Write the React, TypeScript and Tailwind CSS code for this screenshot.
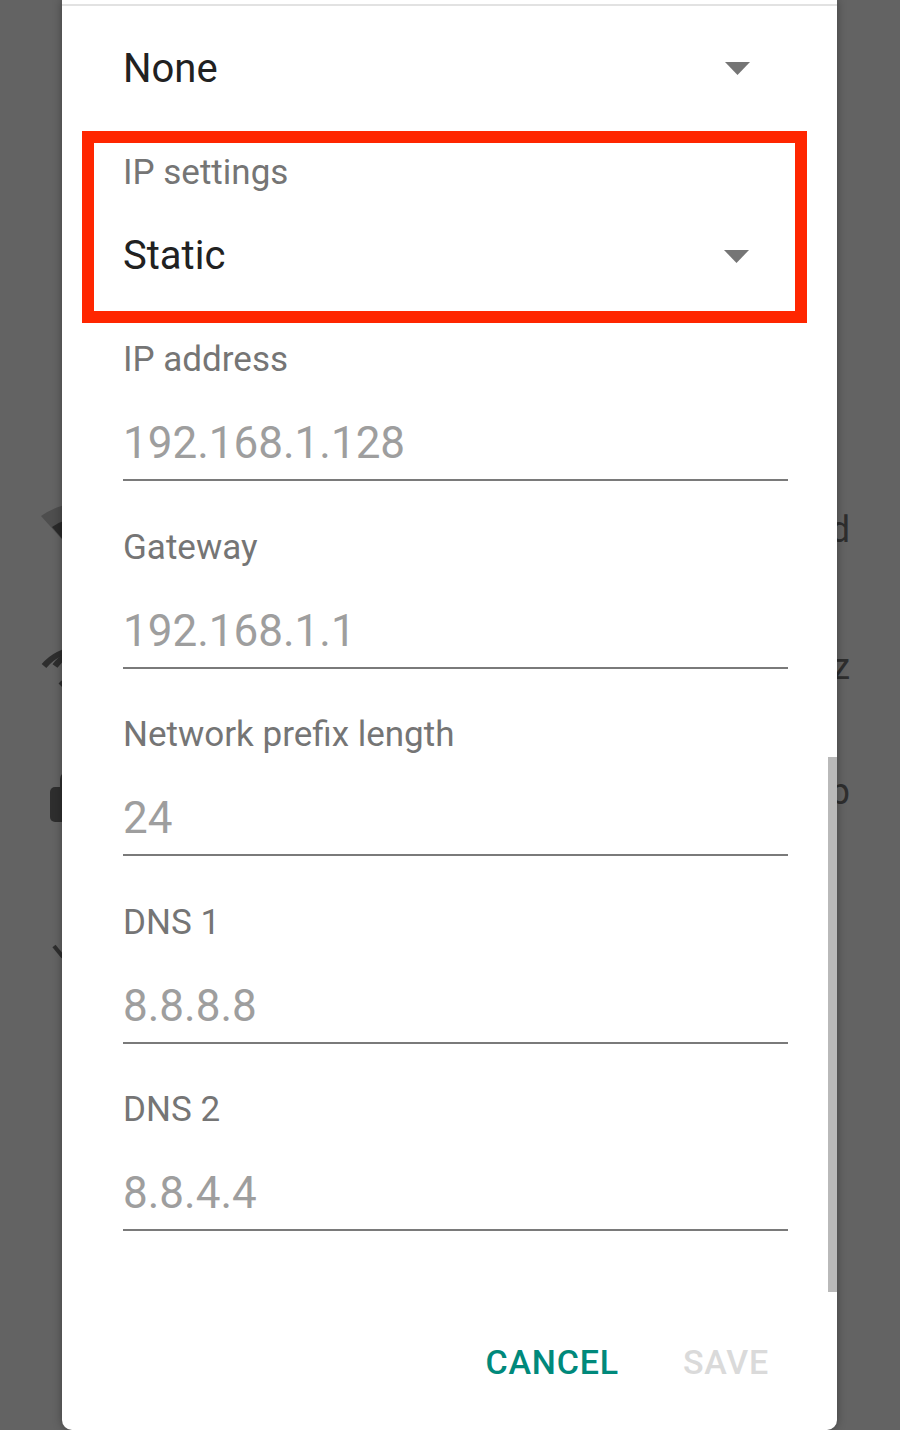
import React from "react";

const font = { fontFamily: "Roboto, 'Noto Sans', sans-serif" };

/* ── dropdown caret ── */
const Caret = () => (
  <svg width="25" height="13" viewBox="0 0 25 13" className="shrink-0">
    <path d="M0 0 H25 L12.5 13 Z" fill="#757575" />
  </svg>
);

const fields = [
  { label: "IP address", value: "192.168.1.128" },
  { label: "Gateway", value: "192.168.1.1" },
  { label: "Network prefix length", value: "24" },
  { label: "DNS 1", value: "8.8.8.8" },
  { label: "DNS 2", value: "8.8.4.4" },
];

/* ── bits of the wifi list peeking out behind the dialog ── */
const Backdrop = () => (
  <div className="absolute inset-0 pointer-events-none">
    <svg className="absolute left-[39px] top-[494px]" width="90" height="70" viewBox="0 0 90 70">
      <path d="M2 22 A75 75 0 0 1 88 22 L45 70 Z" fill="#4e4e4e" />
      <path d="M13 33 A58 58 0 0 1 77 33 L45 70 Z" fill="#2a2a2a" />
    </svg>
    <svg className="absolute left-[38px] top-[632px]" width="80" height="70" viewBox="0 0 80 70">
      <path d="M6 34 A44 44 0 0 1 74 34" stroke="#2e2e2e" strokeWidth="6" fill="none" />
      <path d="M17 34 A28 28 0 0 1 63 34" stroke="#2e2e2e" strokeWidth="6" fill="none" />
      <path d="M22 50 L26 54" stroke="#2e2e2e" strokeWidth="4" />
    </svg>
    <div className="absolute left-[60px] top-[772px] w-[14px] h-[20px] rounded-t-[7px] border-[4px] border-b-0 border-[#2e2e2e]" />
    <div className="absolute left-[50px] top-[787px] w-[30px] h-[35px] rounded-[5px] bg-[#2e2e2e]" />
    <svg className="absolute left-[50px] top-[940px]" width="30" height="30" viewBox="0 0 30 30">
      <path d="M4 6 L13 17" stroke="#2e2e2e" strokeWidth="4" />
    </svg>
    <span className="absolute right-[50px] top-[508px] text-[36px] leading-[44px] text-[#2e2e2e]" style={font}>Saved</span>
    <span className="absolute right-[50px] top-[645px] text-[36px] leading-[44px] text-[#2e2e2e]" style={font}>5 GHz</span>
    <span className="absolute right-[50px] top-[770px] text-[36px] leading-[44px] text-[#2e2e2e]" style={font}>Setup</span>
  </div>
);

const Field = ({ label, value }: { label: string; value: string }) => (
  <div className="flex flex-col pl-[61px] pr-[49px] pb-[46.5px]">
    <div className="h-[40px] leading-[40px] text-[35px] text-[#757575]">{label}</div>
    <div className="mt-[38px] h-[50px] leading-[50px] text-[44px] text-[#9e9e9e]">{value}</div>
    <div className="mt-[11px] h-[2px] bg-[#7a7a7a]" />
  </div>
);

export default function App() {
  return (
    <div className="relative w-[900px] h-[1430px] overflow-hidden bg-[#636363]" style={font}>
      <Backdrop />

      <div className="relative z-10 ml-[62px] w-[775px] h-[1430px] bg-white rounded-b-[10px] shadow-[0_0_10px_rgba(0,0,0,0.35)] overflow-hidden flex flex-col">
        {/* top divider */}
        <div className="h-[6px] border-b-2 border-[#e2e2e2]" />

        {/* proxy dropdown */}
        <div className="h-[125px] flex items-center justify-between pl-[61px] pr-[87px]">
          <span className="text-[40px] text-[#212121]">None</span>
          <Caret />
        </div>

        {/* highlighted IP settings */}
        <div className="ml-[20px] w-[725px] h-[192px] border-[12px] border-[#ff2600] flex flex-col">
          <div className="mt-[10px] pl-[29px] h-[40px] leading-[40px] text-[35px] text-[#757575]">IP settings</div>
          <div className="mt-[38px] h-[50px] flex items-center justify-between pl-[29px] pr-[46px]">
            <span className="text-[40px] text-[#212121]">Static</span>
            <Caret />
          </div>
        </div>

        <div className="mt-[17px] flex flex-col">
          {fields.map((f) => (
            <Field key={f.label} label={f.label} value={f.value} />
          ))}
        </div>

        {/* actions */}
        <div className="mt-[35px] h-[100px] flex items-center justify-end gap-[64px] pr-[68px] text-[34px] font-medium tracking-[0.8px]">
          <span className="text-[#00897b]">CANCEL</span>
          <span className="text-[#dadada]">SAVE</span>
        </div>

        {/* scrollbar */}
        <div className="absolute right-0 top-[757px] w-[9px] h-[535px] bg-[#b9b9b9]" />
      </div>
    </div>
  );
}
